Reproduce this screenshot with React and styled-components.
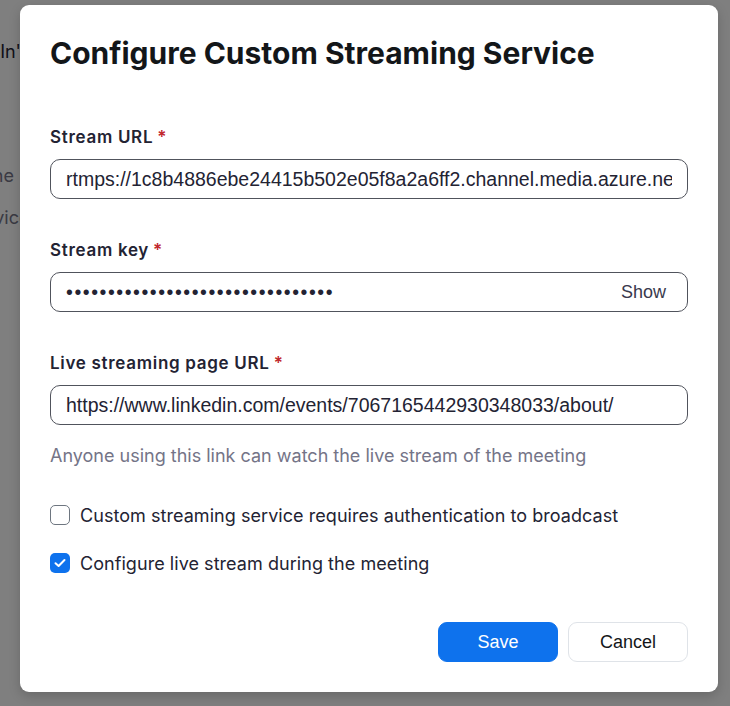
import React from 'react';
import styled, { createGlobalStyle } from 'styled-components';

const GlobalStyle = createGlobalStyle`
  html, body {
    margin: 0;
    padding: 0;
  }
  body {
    font-family: Inter, "Noto Sans", sans-serif;
    background: #ffffff;
  }
`;

const Page = styled.div`
  position: relative;
  width: 730px;
  height: 706px;
  overflow: hidden;
  background: #ffffff;
`;

// the page under the modal, scrolled so only its left edge shows
const BehindColumn = styled.div`
  display: flex;
  flex-direction: column;
  padding-top: 40px;
  font-size: 18px;
  line-height: 24px;
`;

const BehindLine = styled.div`
  display: flex;
  white-space: nowrap;
  color: ${p => p.$muted ? '#747487' : '#232333'};
  margin-top: ${p => p.$gap || 0}px;
`;

// the scrolled-off start of a line, ending at the given x
const LineStart = styled.span`
  width: ${p => p.$end}px;
  flex-shrink: 0;
  display: flex;
  justify-content: flex-end;
`;

const Overlay = styled.div`
  position: absolute;
  inset: 0;
  background: rgba(0, 0, 0, 0.5);
  display: flex;
  align-items: flex-start;
  padding: 5px 12px 0 20px;
`;

const Dialog = styled.div`
  width: 698px;
  height: 687px;
  box-sizing: border-box;
  background: #ffffff;
  border-radius: 9px;
  box-shadow: 0 4px 12px rgba(0, 0, 0, 0.18);
  padding: 30px;
  display: flex;
  flex-direction: column;
`;

const Title = styled.h2`
  margin: 0 0 53px;
  font-size: 30px;
  line-height: 37px;
  font-weight: 700;
  color: #131619;
`;

const Field = styled.div`
  display: flex;
  flex-direction: column;
  margin-bottom: 39px;
`;

const Label = styled.label`
  font-size: 17px;
  line-height: 24px;
  font-weight: 600;
  letter-spacing: 0.7px;
  color: #232333;
  margin-bottom: 10px;
`;

const Required = styled.span`
  color: #c1272d;
  margin-left: 4px;
`;

const InputBox = styled.div`
  height: 40px;
  box-sizing: border-box;
  border: 1px solid #50535c;
  border-radius: 10px;
  display: flex;
  align-items: center;
  padding: 0 15px;
`;

const TextInput = styled.input`
  flex: 1;
  min-width: 0;
  border: none;
  outline: none;
  padding: 0;
  background: transparent;
  font-family: "Liberation Sans", Arial, sans-serif;
  font-size: 19.5px;
  color: #232333;
  letter-spacing: ${p => p.$spacing || 'normal'};
`;

const ShowButton = styled.button`
  border: none;
  background: none;
  padding: 0;
  margin-right: 6px;
  font-family: "Liberation Sans", Arial, sans-serif;
  font-size: 18px;
  color: #39394d;
  cursor: pointer;
`;

const Helper = styled.p`
  margin: -20px 0 35px;
  font-size: 18px;
  line-height: 24px;
  color: #747487;
`;

const CheckRow = styled.label`
  display: flex;
  align-items: center;
  gap: 10px;
  height: 24px;
  margin-bottom: 24px;
  font-size: 18px;
  letter-spacing: 0.05px;
  color: #232333;
  cursor: pointer;
`;

const Box = styled.span`
  width: 20px;
  height: 20px;
  box-sizing: border-box;
  border-radius: 5px;
  border: ${p => p.$checked ? 'none' : '1px solid #6e7680'};
  background: ${p => p.$checked ? '#0e72ed' : '#ffffff'};
  display: flex;
  align-items: center;
  justify-content: center;
  flex-shrink: 0;
`;

const Footer = styled.div`
  margin-top: auto;
  display: flex;
  justify-content: flex-end;
  gap: 10px;
`;

const Button = styled.button`
  width: 120px;
  height: 40px;
  box-sizing: border-box;
  border-radius: 9px;
  font-family: "Liberation Sans", Arial, sans-serif;
  font-size: 18px;
  cursor: pointer;
  background: ${p => p.$primary ? '#0e72ed' : '#ffffff'};
  color: ${p => p.$primary ? '#ffffff' : '#131619'};
  border: 1px solid ${p => p.$primary ? '#0e72ed' : '#dfe3e8'};
`;

const Check = ({ checked, label }) => (
  <CheckRow>
    <Box $checked={checked}>
      {checked && (
        <svg width="12" height="10" viewBox="0 0 12 10">
          <path d="M1.5 5.2 L4.6 8 L10.5 2" fill="none" stroke="#fff" strokeWidth="2" strokeLinecap="round" strokeLinejoin="round" />
        </svg>
      )}
    </Box>
    {label}
  </CheckRow>
);

const App = () => {
  return (
    <Page>
      <GlobalStyle />
      <BehindColumn>
        <BehindLine>
          <LineStart $end={21}>Stream to LinkedIn'</LineStart>s
        </BehindLine>
        <BehindLine $muted $gap={100}>
          <LineStart $end={14}>Show the streaming page link to the phone</LineStart>
        </BehindLine>
        <BehindLine $muted $gap={18}>
          <LineStart $end={19}>Custom live streaming servic</LineStart>e
        </BehindLine>
      </BehindColumn>
      <Overlay>
        <Dialog>
          <Title>Configure Custom Streaming Service</Title>
          <Field>
            <Label>Stream URL<Required>*</Required></Label>
            <InputBox>
              <TextInput readOnly value="rtmps://1c8b4886ebe24415b502e05f8a2a6ff2.channel.media.azure.net:2935/live/" />
            </InputBox>
          </Field>
          <Field>
            <Label>Stream key<Required>*</Required></Label>
            <InputBox>
              <TextInput readOnly type="password" $spacing="1.55px" value="abcdefghijabcdefghijabcdefghij12" />
              <ShowButton>Show</ShowButton>
            </InputBox>
          </Field>
          <Field>
            <Label>Live streaming page URL<Required>*</Required></Label>
            <InputBox>
              <TextInput readOnly value="https://www.linkedin.com/events/7067165442930348033/about/" />
            </InputBox>
          </Field>
          <Helper>Anyone using this link can watch the live stream of the meeting</Helper>
          <Check label="Custom streaming service requires authentication to broadcast" />
          <Check checked label="Configure live stream during the meeting" />
          <Footer>
            <Button $primary>Save</Button>
            <Button>Cancel</Button>
          </Footer>
        </Dialog>
      </Overlay>
    </Page>
  );
};

export default App;
